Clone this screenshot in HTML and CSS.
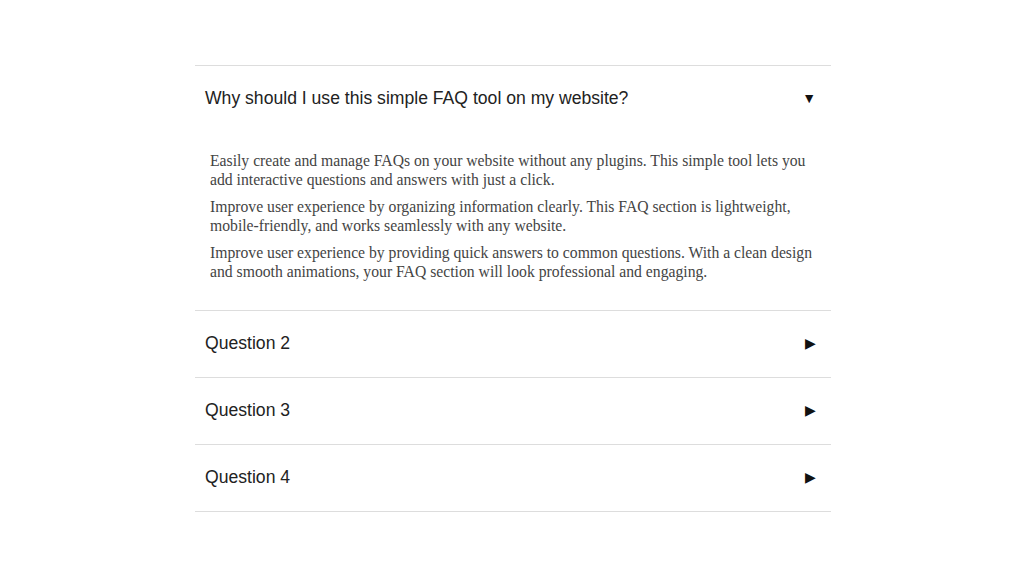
FILE: index.html
```html
<!DOCTYPE html>
<html lang="en">
<head>
  <meta charset="UTF-8">
  <meta name="viewport" content="width=device-width, initial-scale=1.0">
  <title>Simple FAQ</title>
  <link rel="stylesheet" href="styles.css">
</head>
<body>
  <div class="faq">
    <!-- open item -->
    <div class="faq-item open">
      <div class="faq-question" onclick="toggleItem(this)">
        <span>Why should I use this simple FAQ tool on my website?</span>
        <span class="arrow">&#9660;</span>
      </div>
      <div class="faq-answer">
        <p>Easily create and manage FAQs on your website without any plugins. This simple tool lets you add interactive questions and answers with just a click.</p>
        <p>Improve user experience by organizing information clearly. This FAQ section is lightweight, mobile-friendly, and works seamlessly with any website.</p>
        <p>Improve user experience by providing quick answers to common questions. With a clean design and smooth animations, your FAQ section will look professional and engaging.</p>
      </div>
    </div>

    <div class="faq-item">
      <div class="faq-question" onclick="toggleItem(this)">
        <span>Question 2</span>
        <span class="arrow">&#9654;</span>
      </div>
      <div class="faq-answer"><p>Answer 2</p></div>
    </div>

    <div class="faq-item">
      <div class="faq-question" onclick="toggleItem(this)">
        <span>Question 3</span>
        <span class="arrow">&#9654;</span>
      </div>
      <div class="faq-answer"><p>Answer 3</p></div>
    </div>

    <div class="faq-item">
      <div class="faq-question" onclick="toggleItem(this)">
        <span>Question 4</span>
        <span class="arrow">&#9654;</span>
      </div>
      <div class="faq-answer"><p>Answer 4</p></div>
    </div>
  </div>

  <script>
    function toggleItem(question) {
      const item = question.parentElement;
      const open = item.classList.toggle("open");
      question.querySelector(".arrow").innerHTML = open ? "&#9660;" : "&#9654;";
    }
  </script>
</body>
</html>
```

FILE: styles.css
```css
body {
  font-family: 'Liberation Serif', 'Times New Roman', serif;
  background-color: #fff;
  margin: 0;
  padding: 65px 0 0 2px;
}
.faq {
  width: 636px;
  margin: 0 auto;
  border-top: 1px solid #ddd;
}
.faq-item {
  border-bottom: 1px solid #ddd;
}
.faq-question {
  display: flex;
  justify-content: space-between;
  align-items: center;
  padding: 21px 15px 23px 10px;
  font-family: 'Liberation Sans', Arial, sans-serif;
  font-size: 17.6px;
  line-height: 22px;
  color: #222;
  cursor: pointer;
}
.arrow {
  font-size: 14px;
  line-height: 20px;
  color: #111;
}
.faq-answer {
  display: none;
  padding: 11px 15px 21px;
  font-size: 15.7px;
  line-height: 19px;
  color: #444;
}
.faq-item.open .faq-answer {
  display: block;
}
.faq-answer p {
  margin: 8px 0;
}
```
